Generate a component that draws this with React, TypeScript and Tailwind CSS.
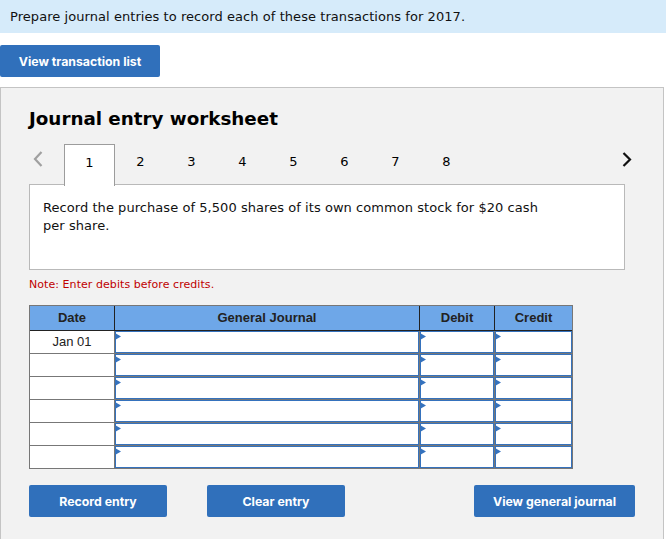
const tabs = ['1', '2', '3', '4', '5', '6', '7', '8']
const rows = ['Jan 01', '', '', '', '', '']

function EntryCell({ width, last }: { width: string; last?: boolean }) {
  return (
    <div className={`h-full ${width} ${last ? '' : 'border-r border-[#777]'}`}>
      <div className="relative h-full border border-[#3572bd] bg-white">
        <svg className="absolute -left-px top-px" width="6" height="7" viewBox="0 0 6 7">
          <path d="M0 0 L6 3.5 L0 7 Z" fill="#3572bd" />
        </svg>
      </div>
    </div>
  )
}

function ActionButton({ label, width }: { label: string; width: string }) {
  return (
    <button className={`${width} h-8 rounded-[2px] bg-[#3070bb] pt-[2px] font-['Inter',sans-serif] text-[12.3px] font-bold text-white`}>
      {label}
    </button>
  )
}

export default function App() {
  return (
    <div className="flex h-[539px] w-[666px] flex-col overflow-hidden bg-white font-['DejaVu_Sans',sans-serif] text-black">
      <div className="flex h-[33px] items-center bg-[#d6ebfa] pl-2.5 text-[13px] tracking-[0.06px] text-[#111]">
        Prepare journal entries to record each of these transactions for 2017.
      </div>
      <button className="mt-3 h-8 w-40 rounded-[2px] bg-[#3070bb] pt-[2px] font-['Inter',sans-serif] text-[12.3px] font-bold text-white">
        View transaction list
      </button>
      <div className="mt-2.5 w-[664px] flex-1 border border-b-0 border-[#c4c4c4] bg-[#f2f2f2] pl-7">
        <h2 className="mt-[19px] h-6 text-[18.3px] font-bold leading-6">Journal entry worksheet</h2>
        <div className="relative mt-[13px] flex h-[41px] pl-[35px]">
          <svg className="absolute left-[4px] top-[7px]" width="10" height="16" viewBox="0 0 10 16" fill="none">
            <path d="M8.5 1 L2 8 L8.5 15" stroke="#a0a0a0" strokeWidth="2.2" />
          </svg>
          {tabs.map((tab, i) => (
            <div
              key={tab}
              className={`flex h-[41px] w-[51px] shrink-0 items-center justify-center pb-[5px] text-[13px] ${
                i === 0 ? 'relative z-10 h-[42px] border border-b-0 border-[#9c9c9c] bg-white' : ''
              }`}
            >
              {tab}
            </div>
          ))}
          <svg className="absolute left-[593px] top-[8px]" width="10" height="15" viewBox="0 0 10 15" fill="none">
            <path d="M1.5 1 L8 7.5 L1.5 14" stroke="#111" strokeWidth="2.2" />
          </svg>
        </div>
        <div className="-mt-px h-[86px] w-[596px] border border-[#b9b9b9] bg-white pl-[13px] pr-16 pt-3.5 text-[13px] leading-[18px] tracking-[0.055px] text-[#111]">
          Record the purchase of 5,500 shares of its own common stock for $20 cash per share.
        </div>
        <p className="mt-[7px] text-[11px] leading-4 tracking-[0.06px] text-[#c00000]">Note: Enter debits before credits.</p>
        <div className="mt-3 w-[544px] border border-[#777] font-['Liberation_Sans',sans-serif] text-[13px]">
          <div className="flex h-[25px] border-b border-[#222] bg-[#6ea7e8] font-bold text-[#222]">
            <div className="flex w-[85px] items-center justify-center border-r border-[#222]">Date</div>
            <div className="flex w-[305px] items-center justify-center border-r border-[#222]">General Journal</div>
            <div className="flex w-[75px] items-center justify-center border-r border-[#222]">Debit</div>
            <div className="flex w-[77px] items-center justify-center">Credit</div>
          </div>
          {rows.map((date, i) => (
            <div key={i} className="flex h-[23px] border-b border-[#777] bg-white last:h-[22px] last:border-b-0">
              <div className="flex h-full w-[85px] items-center justify-center border-r border-[#777] text-[#222]">
                {date}
              </div>
              <EntryCell width="w-[305px]" />
              <EntryCell width="w-[75px]" />
              <EntryCell width="w-[77px]" last />
            </div>
          ))}
        </div>
        <div className="mt-4 flex w-[606px]">
          <ActionButton label="Record entry" width="w-[138px]" />
          <div className="w-10" />
          <ActionButton label="Clear entry" width="w-[138px]" />
          <div className="flex-1" />
          <ActionButton label="View general journal" width="w-[161px]" />
        </div>
      </div>
    </div>
  )
}
